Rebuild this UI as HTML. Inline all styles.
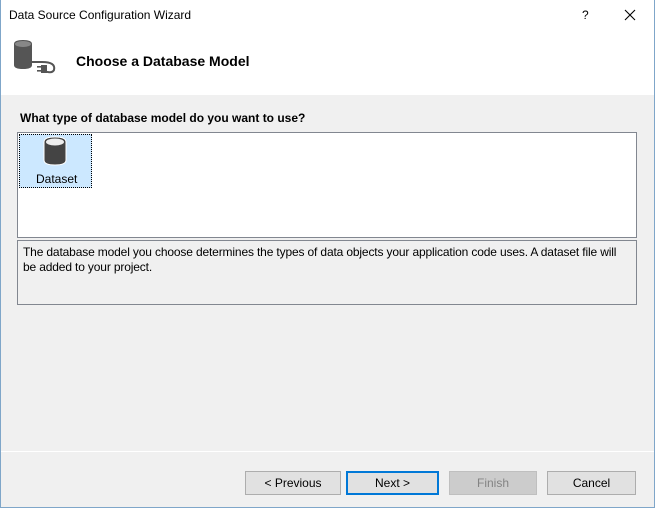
<!DOCTYPE html>
<html><head><style>
*{margin:0;padding:0;box-sizing:border-box}
body{width:655px;height:508px;overflow:hidden;font-family:"Liberation Sans",sans-serif;font-size:12px;color:#000;background:#f0f0f0;position:relative}
.abs{position:absolute}
.top{left:0;top:0;width:655px;height:95px;background:#fff}
.btn{position:absolute;top:471px;height:24px;border:1px solid #adadad;background:#e1e1e1;text-align:center;line-height:22px;font-size:12px}
</style></head><body>
<div class="abs top"></div>
<div class="abs" style="left:9px;top:8px;font-size:12px">Data Source Configuration Wizard</div>
<div class="abs" style="left:582px;top:8px;font-size:12px">?</div>
<svg class="abs" style="left:624px;top:9px" width="12" height="12"><path d="M1 1L11 11M11 1L1 11" stroke="#000" stroke-width="1.1"/></svg>
<svg class="abs" style="left:12px;top:38px" width="46" height="40">
<path d="M2 6 Q2 2 11 2 Q20 2 20 6 V27 Q20 31 11 31 Q2 31 2 27Z" fill="#555"/>
<ellipse cx="11" cy="6" rx="8" ry="3" fill="#888"/>
<path d="M20 24 Q28 24 30 24 Q44 24 42 32 Q40 36 32 33" stroke="#555" stroke-width="2" fill="none"/>
<rect x="29" y="27" width="6" height="8" fill="#555"/>
<rect x="25" y="28" width="4" height="1.6" fill="#555"/><rect x="25" y="32" width="4" height="1.6" fill="#555"/>
</svg>
<div class="abs" style="left:76px;top:53px;font-size:14px;font-weight:bold">Choose a Database Model</div>
<div class="abs" style="left:20px;top:111px;font-weight:bold">What type of database model do you want to use?</div>
<div class="abs" style="left:17px;top:132px;width:620px;height:106px;background:#fff;border:1px solid #828790"></div>
<div class="abs" style="left:19px;top:134px;width:73px;height:54px;background:#cce8ff;border:1px dotted #000"></div>
<svg class="abs" style="left:42px;top:136px" width="26" height="30">
<path d="M2 6 Q2 1 13 1 Q24 1 24 6 V24 Q24 29 13 29 Q2 29 2 24Z" fill="#444" stroke="#fff" stroke-width="1"/>
<ellipse cx="13" cy="6" rx="9" ry="3.5" fill="#eee"/>
</svg>
<div class="abs" style="left:36px;top:172px">Dataset</div>
<div class="abs" style="left:17px;top:240px;width:620px;height:65px;border:1px solid #828790;background:#f0f0f0"></div>
<div class="abs" style="left:23px;top:245px;line-height:15px;white-space:nowrap;letter-spacing:-0.15px">The database model you choose determines the types of data objects your application code uses. A dataset file will<br>be added to your project.</div>
<div class="abs" style="left:0;top:451px;width:655px;height:1px;background:#fff"></div>
<div class="btn" style="left:245px;width:96px">&lt; Previous</div>
<div class="btn" style="left:346px;width:93px;border:2px solid #0078d7;line-height:20px">Next &gt;</div>
<div class="btn" style="left:449px;width:88px;background:#ccc;border-color:#bfbfbf;color:#838383">Finish</div>
<div class="btn" style="left:547px;width:89px">Cancel</div>
<div class="abs" style="left:0;top:0;width:655px;height:508px;border:1px solid #7fa6c9;border-top:none"></div>
</body></html>
